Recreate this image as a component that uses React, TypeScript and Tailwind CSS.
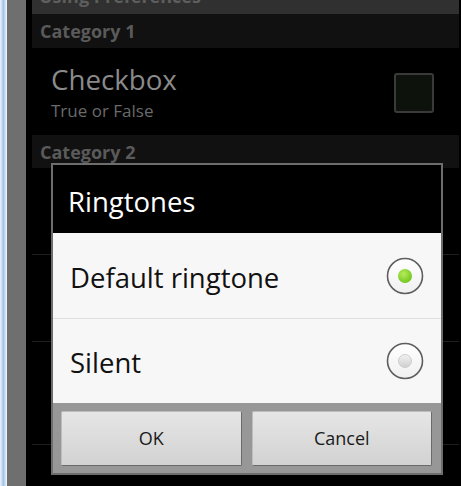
import React from "react";

function Radio({ checked }: { checked: boolean }) {
  return (
    <svg width="38" height="38" viewBox="0 0 38 38">
      <defs>
        <radialGradient id="g1" cx="40%" cy="35%" r="70%">
          <stop offset="0%" stopColor="#b6ec5c" />
          <stop offset="100%" stopColor="#6fc41a" />
        </radialGradient>
        <linearGradient id="g2" x1="0" y1="0" x2="0" y2="1">
          <stop offset="0%" stopColor="#f2f2f2" />
          <stop offset="100%" stopColor="#cfcfcf" />
        </linearGradient>
        <linearGradient id="bg" x1="0" y1="0" x2="0" y2="1">
          <stop offset="0%" stopColor="#ffffff" />
          <stop offset="100%" stopColor="#f0f0f0" />
        </linearGradient>
      </defs>
      <circle cx="19" cy="19" r="17.5" fill="url(#bg)" stroke="#5e5e5e" strokeWidth="1.6" />
      {checked ? (
        <circle cx="19" cy="19" r="7" fill="url(#g1)" />
      ) : (
        <circle cx="19" cy="19" r="6.5" fill="url(#g2)" stroke="#c4c4c4" strokeWidth="0.8" />
      )}
    </svg>
  );
}

export default function App() {
  const font = { fontFamily: '"Open Sans", "DejaVu Sans", sans-serif' };
  return (
    <div
      className="relative flex w-[461px] h-[486px] overflow-hidden bg-black"
      style={font}
    >
      <div className="w-[7px] h-full bg-gradient-to-r from-[#eef4fb] via-[#a6c4e6] to-[#f4f8fc]" />
      <div className="w-[19px] h-full bg-[#6f6f6f]" />
      <div className="w-[6px] h-full bg-black" />
      <div className="flex flex-col w-[427px] h-full">
        <div className="h-[14px] bg-[#2f302f] overflow-hidden pl-[7px]">
          <div className="mt-[-13px] text-[18px] leading-none font-bold text-[#5e5e5e] whitespace-nowrap">
            Using Preferences
          </div>
        </div>
        <div className="h-[34px] bg-[#111111] flex items-center pl-[8px]">
          <span className="text-[18px] leading-none font-bold text-[#5a5a5a]">Category 1</span>
        </div>
        <div className="h-[87px] flex items-start justify-between pl-[19px] pr-[25px]">
          <div className="flex flex-col pt-[16px]">
            <span className="text-[27.7px] leading-[30px] text-[#8a8a8a]">Checkbox</span>
            <span className="text-[17px] leading-[22px] mt-[6px] text-[#6a6a6a]">True or False</span>
          </div>
          <div className="mt-[25px] w-[40px] h-[40px] rounded-[3px] border-2 border-[#3a3a3a] bg-[#0d120d]" />
        </div>
        <div className="h-[33px] bg-[#111111] flex items-center pl-[8px]">
          <span className="text-[18px] leading-none font-bold text-[#5a5a5a]">Category 2</span>
        </div>
        <div className="h-[87px] border-b border-[#1e1e1e]" />
        <div className="h-[87px] border-b border-[#1e1e1e]" />
        <div className="h-[103px] border-b border-[#1e1e1e]" />
      </div>

      <div className="absolute left-[51px] top-[163px] w-[392px] h-[312px] border-2 border-[#6d6d6d] bg-black flex flex-col">
        <div className="h-[68px] flex items-center pl-[15px] pt-[6px]">
          <span className="text-[27.5px] leading-none text-white">Ringtones</span>
        </div>
        <div className="flex flex-col bg-[#f7f7f7]">
          <div className="h-[86px] flex items-center justify-between pl-[17px] pr-[17px] border-b border-[#e0e0e0]">
            <span className="text-[27.5px] leading-none text-[#111111] pt-[4px]">Default ringtone</span>
            <Radio checked={true} />
          </div>
          <div className="h-[84px] flex items-center justify-between pl-[17px] pr-[17px]">
            <span className="text-[27.5px] leading-none text-[#111111] pt-[4px]">Silent</span>
            <Radio checked={false} />
          </div>
        </div>
        <div className="flex-1 bg-[#979797] flex gap-[10px] pl-[8px] pr-[9px] pt-[8px] pb-[7px]">
          <button className="flex-1 flex items-center justify-center rounded-[2px] bg-gradient-to-b from-[#e6e6e6] to-[#d2d2d2] border-r border-b border-[#6a6a6a] border-t border-l border-t-[#bdbdbd] border-l-[#bdbdbd] text-[18px] text-[#1a1a1a]">
            OK
          </button>
          <button className="flex-1 flex items-center justify-center rounded-[2px] bg-gradient-to-b from-[#e6e6e6] to-[#d2d2d2] border-r border-b border-[#6a6a6a] border-t border-l border-t-[#bdbdbd] border-l-[#bdbdbd] text-[18px] text-[#1a1a1a]">
            Cancel
          </button>
        </div>
      </div>
    </div>
  );
}
